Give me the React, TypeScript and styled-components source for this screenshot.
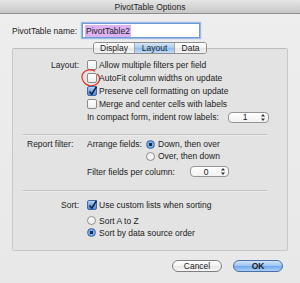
import styled, { createGlobalStyle } from 'styled-components';

const GlobalStyle = createGlobalStyle`
  html, body { margin: 0; padding: 0; }
  body {
    background: #ececec;
    font-family: 'Liberation Sans', Arial, sans-serif;
    font-size: 8.5px;
    color: #1c1c1c;
  }
`;

const Window = styled.div`
  width: 300px;
  height: 283px;
  display: flex;
  flex-direction: column;
  background: linear-gradient(#eeeeee, #e8e8e8);
  overflow: hidden;
`;

const TitleBar = styled.div`
  height: 13px;
  flex-shrink: 0;
  display: flex;
  align-items: center;
  justify-content: center;
  border-bottom: 1px solid #8e8e8e;
  background: linear-gradient(#e6e6e6, #c6c6c6);
  font-size: 8.5px;
  color: #262626;
`;

const NameRow = styled.div`
  display: flex;
  align-items: center;
  margin-top: 9px;
  padding-left: 12px;
`;

const NameLabel = styled.span`
  width: 70px;
  white-space: nowrap;
`;

const NameInput = styled.div`
  box-sizing: border-box;
  width: 118px;
  height: 15px;
  display: flex;
  align-items: center;
  padding-left: 2px;
  background: #fff;
  border: 1px solid #6f9bd8;
  box-shadow: 0 0 1px 1px rgba(110, 160, 225, 0.65);
`;

const Selected = styled.span`
  background: #dcb2f4;
  padding: 1px 1px;
  line-height: 10px;
`;

const Tabs = styled.div`
  position: relative;
  z-index: 1;
  align-self: center;
  display: flex;
  margin-top: 3.5px;
  margin-bottom: -6px;
  height: 12px;
  border: 1px solid #8f8f8f;
  border-radius: 3px;
  overflow: hidden;
  box-sizing: border-box;
`;

const Tab = styled.div<{ active?: boolean; w: number }>`
  width: ${({ w }) => w}px;
  display: flex;
  align-items: center;
  justify-content: center;
  background: ${({ active }) =>
    active ? 'linear-gradient(#d3e5fa, #a9cbf2 50%, #8fbbf0 51%, #c2dcf8)' : 'linear-gradient(#ffffff, #f1f1f1 50%, #e4e4e4 51%, #f4f4f4)'};
  & + & {
    border-left: 1px solid #a6a6a6;
  }
`;

const Panel = styled.div`
  box-sizing: border-box;
  height: 203px;
  margin: 0 12px;
  padding-top: 10px;
  display: flex;
  flex-direction: column;
  background: #e3e3e3;
  border: 1px solid #c8c8c8;
  border-top-color: #bdbdbd;
  border-radius: 2px;
`;

const Section = styled.div<{ top?: number }>`
  display: grid;
  grid-template-columns: 66px 1fr;
  column-gap: 8px;
  margin-top: ${({ top }) => top ?? 0}px;
`;

const Label = styled.div<{ left?: boolean; h?: number }>`
  height: ${({ h }) => h ?? 13}px;
  display: flex;
  align-items: center;
  justify-content: ${({ left }) => (left ? 'flex-start' : 'flex-end')};
  padding-left: ${({ left }) => (left ? 14 : 0)}px;
  white-space: nowrap;
`;

const Rows = styled.div`
  display: flex;
  flex-direction: column;
`;

const Row = styled.div<{ h?: number; top?: number; indent?: number }>`
  height: ${({ h }) => h ?? 13}px;
  margin-top: ${({ top }) => top ?? 0}px;
  padding-left: ${({ indent }) => indent ?? 0}px;
  display: flex;
  align-items: center;
  gap: 2px;
  white-space: nowrap;
`;

const RowText = styled.span<{ w?: number; gap?: number }>`
  width: ${({ w }) => (w ? `${w}px` : 'auto')};
  margin-right: ${({ gap }) => gap ?? 0}px;
`;

const Separator = styled.div<{ top: number }>`
  height: 1px;
  margin: ${({ top }) => top}px 20px 0 10px;
  background: #c2c2c2;
  box-shadow: 0 1px 0 #ededed;
`;

const BoxWrap = styled.span`
  position: relative;
  display: inline-flex;
  flex-shrink: 0;
`;

const Box = styled.span<{ checked?: boolean }>`
  box-sizing: border-box;
  width: 10px;
  height: 10px;
  border-radius: 2px;
  border: 1px solid ${({ checked }) => (checked ? '#3f6aa8' : '#8c8c8c')};
  background: ${({ checked }) =>
    checked ? 'linear-gradient(#b6d3f6, #6ea3e6 55%, #4d8ce0)' : 'linear-gradient(#ffffff, #ededed)'};
  display: inline-flex;
  overflow: visible;
`;

const Radio = styled.span<{ on?: boolean }>`
  box-sizing: border-box;
  width: 9px;
  height: 9px;
  flex-shrink: 0;
  border-radius: 50%;
  border: 1px solid ${({ on }) => (on ? '#3f6aa8' : '#8c8c8c')};
  background: ${({ on }) =>
    on ? 'radial-gradient(circle, #1c2b44 0 1.6px, #7fb0ec 2px, #4d8ce0 100%)' : 'linear-gradient(#ffffff, #ececec)'};
  margin-right: 1px;
`;

const Ring = styled.svg`
  position: absolute;
  left: -6px;
  top: -4px;
  pointer-events: none;
`;

const Stepper = styled.div<{ w: number }>`
  box-sizing: border-box;
  width: ${({ w }) => w}px;
  height: 11px;
  display: flex;
  align-items: center;
  border: 1px solid #959595;
  border-radius: 4px;
  background: linear-gradient(#ffffff, #f2f2f2);
`;

const StepValue = styled.span`
  flex: 1;
  text-align: center;
`;

const Arrows = styled.svg`
  margin-right: 3px;
`;

const Footer = styled.div`
  display: flex;
  justify-content: flex-end;
  gap: 11px;
  margin-top: 9.5px;
  padding-right: 17px;
`;

const Button = styled.div<{ primary?: boolean }>`
  box-sizing: border-box;
  width: 50px;
  height: 12px;
  display: flex;
  align-items: center;
  justify-content: center;
  border-radius: 7px;
  border: 1px solid ${({ primary }) => (primary ? '#4a6ea6' : '#7f7f7f')};
  background: ${({ primary }) =>
    primary
      ? 'linear-gradient(#d0e4fa, #9cc4f1 50%, #6ea7ea 51%, #a9d0f7)'
      : 'linear-gradient(#ffffff, #f3f3f3 50%, #e6e6e6 51%, #f7f7f7)'};
  font-weight: ${({ primary }) => (primary ? 'bold' : 'normal')};
`;

const Check = ({ checked, ring }: { checked?: boolean; ring?: boolean }) => (
  <BoxWrap>
    <Box checked={checked}>
      {checked && (
        <svg width="10" height="10" viewBox="0 0 10 10" style={{ overflow: 'visible' }}>
          <path d="M1.5 4.5 L3.8 7.2 L8.6 -0.5" fill="none" stroke="#15233a" strokeWidth="1.5" />
        </svg>
      )}
    </Box>
    {ring && (
      <Ring width="20" height="18" viewBox="0 0 20 18">
        <path d="M14 2.2 C10.5 0 3.8 0.4 1.6 5 C-0.6 10 3.5 16.5 9.8 16.8 C15 17 18.6 13.6 18.6 9.6 C18.6 7.4 17.4 6 16.2 5" fill="none" stroke="#e02a22" strokeWidth="1.1" />
      </Ring>
    )}
  </BoxWrap>
);

const Spin = ({ value, w }: { value: string; w: number }) => (
  <Stepper w={w}>
    <StepValue>{value}</StepValue>
    <Arrows width="4" height="7" viewBox="0 0 4 7">
      <path d="M2 0 L4 2.5 L0 2.5 Z M2 7 L4 4.5 L0 4.5 Z" fill="#333" />
    </Arrows>
  </Stepper>
);

export default function App() {
  return (
    <>
      <GlobalStyle />
      <Window>
        <TitleBar>PivotTable Options</TitleBar>
        <NameRow>
          <NameLabel>PivotTable name:</NameLabel>
          <NameInput>
            <Selected>PivotTable2</Selected>
          </NameInput>
        </NameRow>
        <Tabs>
          <Tab w={40}>Display</Tab>
          <Tab w={39} active>
            Layout
          </Tab>
          <Tab w={31}>Data</Tab>
        </Tabs>
        <Panel>
          <Section>
            <Label>Layout:</Label>
            <Rows>
              <Row>
                <Check /> Allow multiple filters per field
              </Row>
              <Row>
                <Check ring /> AutoFit column widths on update
              </Row>
              <Row>
                <Check checked /> Preserve cell formatting on update
              </Row>
              <Row>
                <Check /> Merge and center cells with labels
              </Row>
              <Row>
                <RowText w={139}>In compact form, indent row labels:</RowText>
                <Spin value="1" w={41} />
              </Row>
            </Rows>
          </Section>
          <Separator top={10.5} />
          <Section top={3}>
            <Label left h={12}>
              Report filter:
            </Label>
            <Rows>
              <Row h={12}>
                <RowText w={57}>Arrange fields:</RowText>
                <Radio on /> Down, then over
              </Row>
              <Row h={12} indent={59}>
                <Radio /> Over, then down
              </Row>
              <Row h={12} top={3.5}>
                <RowText w={101}>Filter fields per column:</RowText>
                <Spin value="0" w={39} />
              </Row>
            </Rows>
          </Section>
          <Separator top={12.5} />
          <Section top={7}>
            <Label>Sort:</Label>
            <Rows>
              <Row>
                <Check checked /> Use custom lists when sorting
              </Row>
              <Row h={12} top={3.5}>
                <Radio /> Sort A to Z
              </Row>
              <Row h={12}>
                <Radio on /> Sort by data source order
              </Row>
            </Rows>
          </Section>
        </Panel>
        <Footer>
          <Button>Cancel</Button>
          <Button primary>OK</Button>
        </Footer>
      </Window>
    </>
  );
}
